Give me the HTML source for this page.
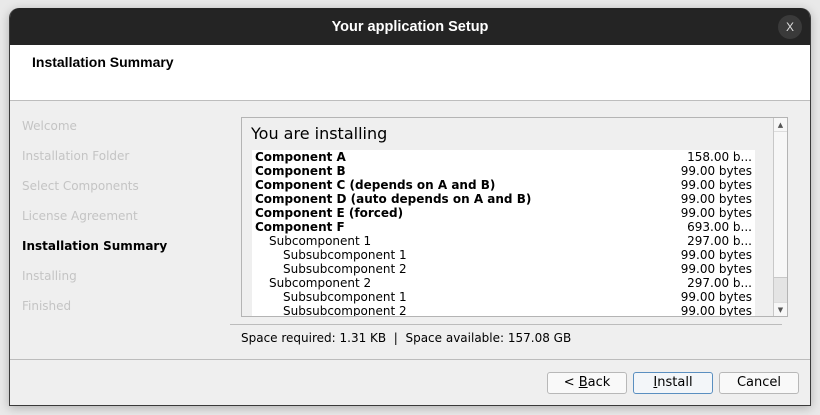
<!DOCTYPE html>
<html><head><meta charset="utf-8"><style>
*{margin:0;padding:0;box-sizing:border-box}
body{width:820px;height:415px;background:#e9e9e9;position:relative;overflow:hidden;font-family:"DejaVu Sans","Liberation Sans",sans-serif;font-size:12px;color:#000}
.win{position:absolute;left:9px;top:8px;width:802px;height:398px;background:#efefef;border:1px solid #3a3a3a;border-top:none;border-radius:10px 10px 0 0;box-shadow:0 2px 10px rgba(0,0,0,.25);overflow:hidden}
.title{position:absolute;left:0;top:0;width:100%;height:37px;background:#242424;color:#fff;font-family:"Liberation Sans",sans-serif;font-weight:bold;font-size:14.5px;text-align:center;line-height:38px}
.close{position:absolute;right:8px;top:7px;width:24px;height:24px;border-radius:12px;background:#3a3a3a;color:#ddd;font-size:12px;line-height:24px;text-align:center;font-weight:normal}
.hdr{position:absolute;left:0;top:37px;width:100%;height:56px;background:#fff;border-bottom:1px solid #bdbdbd}
.hdr b{position:absolute;left:22px;top:9px;font-family:"Liberation Sans",sans-serif;font-size:14px}
.nav{position:absolute;left:12px;color:#c4c4c4}
.box{position:absolute;left:231px;top:109px;width:547px;height:200px;border:1px solid #b4b4b4;background:#efefef}
.box h2{position:absolute;left:9px;top:6px;font-weight:normal;font-size:16px}
.list{position:absolute;left:10px;top:32px;width:503px;height:166px;background:#fff;overflow:hidden}
.r{height:14px;line-height:15px;position:relative;white-space:nowrap}
.r span{position:absolute;right:3px;top:0;font-weight:normal}
.b{font-weight:bold;padding-left:3px}
.s1{padding-left:17px}.s2{padding-left:31px}
.sb{position:absolute;right:0;top:0;width:14px;height:198px;border-left:1px solid #c8c8c8;background:#f7f7f7}
.thumb{position:absolute;left:0;top:159px;width:13px;height:26px;background:#e4e4e4;border-top:1px solid #c8c8c8;border-bottom:1px solid #c8c8c8}
.btn{position:absolute;top:364px;height:22px;border:1px solid #b8b8b8;border-radius:3px;background:#f9f9f9;text-align:center;line-height:20px;font-size:13px}
</style></head><body>
<div class="win">
<div class="title">Your application Setup<div class="close">X</div></div>
<div class="hdr"><b>Installation Summary</b></div>
<div class="nav" style="top:111px">Welcome</div>
<div class="nav" style="top:141px">Installation Folder</div>
<div class="nav" style="top:171px">Select Components</div>
<div class="nav" style="top:201px">License Agreement</div>
<div class="nav" style="top:231px;color:#000;font-weight:bold">Installation Summary</div>
<div class="nav" style="top:261px">Installing</div>
<div class="nav" style="top:291px">Finished</div>
<div class="box"><h2>You are installing</h2>
<div class="list">
<div class="r b">Component A<span>158.00 b...</span></div>
<div class="r b">Component B<span>99.00 bytes</span></div>
<div class="r b">Component C (depends on A and B)<span>99.00 bytes</span></div>
<div class="r b">Component D (auto depends on A and B)<span>99.00 bytes</span></div>
<div class="r b">Component E (forced)<span>99.00 bytes</span></div>
<div class="r b">Component F<span>693.00 b...</span></div>
<div class="r s1">Subcomponent 1<span>297.00 b...</span></div>
<div class="r s2">Subsubcomponent 1<span>99.00 bytes</span></div>
<div class="r s2">Subsubcomponent 2<span>99.00 bytes</span></div>
<div class="r s1">Subcomponent 2<span>297.00 b...</span></div>
<div class="r s2">Subsubcomponent 1<span>99.00 bytes</span></div>
<div class="r s2">Subsubcomponent 2<span>99.00 bytes</span></div>
</div>
<div class="sb"><div style="position:absolute;top:0;left:0;width:13px;height:14px;border-bottom:1px solid #ddd;font-size:7px;text-align:center;line-height:14px;color:#555">▲</div><div class="thumb"></div><div style="position:absolute;bottom:0;left:0;width:13px;height:14px;border-top:1px solid #ddd;font-size:7px;text-align:center;line-height:14px;color:#555">▼</div></div>
</div>
<div style="position:absolute;left:220px;top:316px;width:552px;border-top:1px solid #bcbcbc"></div>
<div style="position:absolute;left:231px;top:323px">Space required: 1.31 KB&nbsp; | &nbsp;Space available: 157.08 GB</div>
<div style="position:absolute;left:0;top:351px;width:100%;border-top:1px solid #bcbcbc"></div>
<div class="btn" style="left:537px;width:80px">&lt; <u>B</u>ack</div>
<div class="btn" style="left:623px;width:80px;border-color:#5a8fc0;background:#f3f6f9"><u>I</u>nstall</div>
<div class="btn" style="left:709px;width:80px">Cancel</div>
</div>
</body></html>
